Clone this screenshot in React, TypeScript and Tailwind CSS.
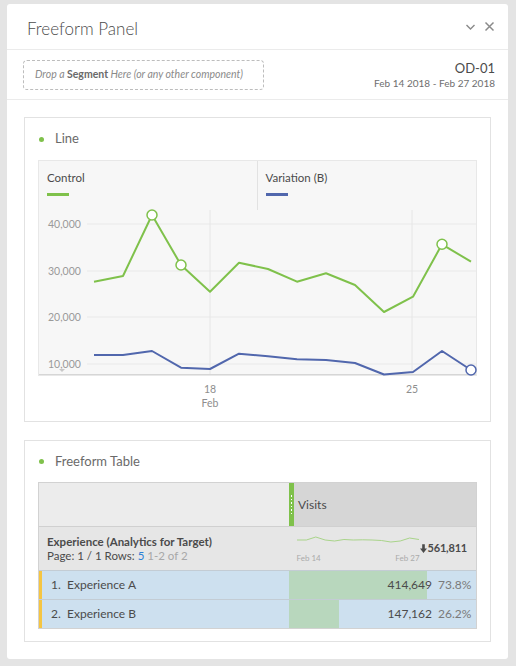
import React from "react";

const F = { fontFamily: "Lato, 'Noto Sans', sans-serif" };

const green = [71.7, 66, 5, 55, 81.7, 52.7, 59, 71.7, 63.3, 75, 102, 86.7, 34.3, 51.7];
const blue = [145, 145, 141, 157.7, 159, 143.7, 146.3, 149.3, 150, 153, 164.5, 162, 141, 160];
const xs = green.map((_, i) => 55 + 29 * i);
const pts = (arr: number[]) => arr.map((y, i) => `${xs[i]},${y}`).join(" ");

function LineChart() {
  const grid = [
    { y: 14, l: "40,000" },
    { y: 61, l: "30,000" },
    { y: 107, l: "20,000" },
    { y: 154, l: "10,000" },
  ];
  return (
    <svg width="437" height="165" className="block overflow-visible">
      {grid.map((g) => (
        <g key={g.l}>
          <line x1="48" x2="437" y1={g.y} y2={g.y} stroke="#e9e9e9" strokeWidth="1" />
          <text x="9" y={g.y + 4} fontSize="10.5" fill="#9a9a9a" fontFamily="Lato, sans-serif">
            {g.l}
          </text>
        </g>
      ))}
      <line x1="171" x2="171" y1="0" y2="165" stroke="#e6e6e6" />
      <line x1="373" x2="373" y1="0" y2="165" stroke="#e6e6e6" />
      <polygon points="20,159 26,159 23,162" fill="#c8c8c8" />
      <line x1="0" x2="437" y1="164.5" y2="164.5" stroke="#d6d6d6" />
      <polyline points={pts(green)} fill="none" stroke="#7fc14b" strokeWidth="2" strokeLinejoin="round" />
      <polyline points={pts(blue)} fill="none" stroke="#5167ad" strokeWidth="2" strokeLinejoin="round" />
      {[2, 3, 12].map((i) => (
        <circle key={i} cx={xs[i]} cy={green[i]} r="5" fill="#fff" stroke="#7fc14b" strokeWidth="1.5" />
      ))}
      <circle cx={xs[13]} cy={blue[13]} r="5" fill="#fff" stroke="#5167ad" strokeWidth="1.5" />
    </svg>
  );
}

function Spark() {
  const d = [4, 4, 1, 4, 5, 3.5, 4, 3.8, 4, 4.5, 6, 5, 2, 3.5];
  const p = d.map((y, i) => `${(i * 122) / 13},${y}`).join(" ");
  return (
    <svg width="123" height="9" className="block shrink-0">
      <polyline points={p} fill="none" stroke="#a9d48a" strokeWidth="1" />
    </svg>
  );
}

export default function App() {
  return (
    <div className="w-[516px] h-[666px] bg-[#e4e4e4] pt-[4px] pl-[7px] pr-[8px]" style={F}>
      <div className="bg-white rounded-[3px] h-[655px] flex flex-col">
        {/* header */}
        <div className="h-[46px] flex items-center justify-between pl-[20px] pr-[13px] border-b border-[#ebebeb] shrink-0">
          <div className="text-[17px] font-light text-[#4b4b4b] leading-none mt-[3px]">Freeform Panel</div>
          <div className="flex items-center gap-[8px]">
            <svg width="11" height="11" viewBox="0 0 11 11">
              <path d="M1.5 4 L5.5 8 L9.5 4" fill="none" stroke="#8a8a8a" strokeWidth="1.4" />
            </svg>
            <svg width="11" height="11" viewBox="0 0 11 11">
              <path d="M1.5 1.5 L9.5 9.5 M9.5 1.5 L1.5 9.5" fill="none" stroke="#8a8a8a" strokeWidth="1.5" />
            </svg>
          </div>
        </div>
        {/* segment row */}
        <div className="h-[50px] flex items-center justify-between pl-[16px] pr-[13px] border-b border-[#ebebeb] shrink-0">
          <div className="w-[241px] h-[30px] border border-dashed border-[#bdbdbd] rounded-[4px] flex items-center pl-[11px] text-[10.5px] italic text-[#8a8a8a]">
            Drop a&nbsp;<span className="font-bold text-[#6a6a6a] not-italic">Segment</span>&nbsp;Here (or any other component)
          </div>
          <div className="flex flex-col items-end">
            <div className="text-[13px] text-[#4b4b4b] leading-[16px]">OD-01</div>
            <div className="text-[10px] text-[#6e6e6e] leading-[14px]">Feb 14 2018 - Feb 27 2018</div>
          </div>
        </div>
        {/* content */}
        <div className="px-[17px] pt-[17px] flex flex-col gap-[18px]">
          {/* Line card */}
          <div className="h-[305px] border border-[#e2e2e2] px-[13px]">
            <div className="h-[42px] flex items-center gap-[11px] pl-[1px]">
              <div className="w-[5px] h-[5px] rounded-full bg-[#7fc14b]" />
              <div className="text-[13px] text-[#6a6a6a]">Line</div>
            </div>
            <div className="border border-[#e8e8e8] bg-[#f7f7f7]">
              <div className="h-[49px] grid grid-cols-2">
                <div className="pl-[8px] pt-[10px] border-r border-[#e2e2e2]">
                  <div className="text-[11.5px] text-[#4b4b4b] leading-[14px]">Control</div>
                  <div className="mt-[8px] w-[22px] h-[3px] bg-[#7fc14b]" />
                </div>
                <div className="pl-[8px] pt-[10px]">
                  <div className="text-[11.5px] text-[#4b4b4b] leading-[14px]">Variation (B)</div>
                  <div className="mt-[8px] w-[22px] h-[3px] bg-[#5167ad]" />
                </div>
              </div>
              <LineChart />
            </div>
            <svg width="439" height="40" className="block">
              <text x="172" y="17" fontSize="10.5" fill="#8e8e8e" textAnchor="middle" fontFamily="Lato, sans-serif">18</text>
              <text x="172" y="31" fontSize="10.5" fill="#8e8e8e" textAnchor="middle" fontFamily="Lato, sans-serif">Feb</text>
              <text x="374" y="17" fontSize="10.5" fill="#8e8e8e" textAnchor="middle" fontFamily="Lato, sans-serif">25</text>
            </svg>
          </div>
          {/* Table card */}
          <div className="h-[202px] border border-[#e2e2e2] px-[13px]">
            <div className="h-[41px] flex items-center gap-[11px] pl-[1px]">
              <div className="w-[5px] h-[5px] rounded-full bg-[#7fc14b]" />
              <div className="text-[13px] text-[#6a6a6a]">Freeform Table</div>
            </div>
            <div className="border border-[#d2d2d2]">
              {/* header */}
              <div className="h-[43px] flex">
                <div className="w-[250px] bg-[#ececec]" />
                <div className="w-[5px] bg-[#7fc14b] flex flex-col items-center justify-center gap-[2px]">
                  {[0, 1, 2, 3, 4, 5].map((i) => (
                    <div key={i} className="w-[1px] h-[1.5px] bg-white" />
                  ))}
                </div>
                <div className="flex-1 bg-[#d6d6d6] flex items-center pl-[4px] text-[12px] text-[#4b4b4b]">Visits</div>
              </div>
              {/* summary */}
              <div className="h-[44px] flex bg-[#e6e6e6] border-t border-[#d0d0d0]">
                <div className="w-[250px] pl-[8px] pt-[8px]">
                  <div className="text-[11.5px] font-bold text-[#4b4b4b] leading-[14px]">Experience (Analytics for Target)</div>
                  <div className="text-[11.5px] text-[#4b4b4b] leading-[14px]">
                    Page: 1 / 1 Rows: <span className="text-[#2d7fd6]">5</span> <span className="text-[#a8a8a8]">1-2 of 2</span>
                  </div>
                </div>
                <div className="flex-1 flex items-center pl-[10px] pr-[9px]">
                  <div className="flex flex-col shrink-0">
                    <div className="pt-[2px]"><Spark /></div>
                    <div className="flex justify-between text-[8px] text-[#ababab] mt-[7px] w-[123px]">
                      <span>Feb 14</span>
                      <span>Feb 27</span>
                    </div>
                  </div>
                  <div className="ml-auto text-[11px] font-bold text-[#4b4b4b] flex items-center tracking-[-0.2px]">
                    <svg width="7" height="9" viewBox="0 0 8 10" className="mr-[1px]">
                      <path d="M2.5 0 H5.5 V5 H8 L4 10 L0 5 H2.5 Z" fill="#4b4b4b" />
                    </svg>
                    561,811
                  </div>
                </div>
              </div>
              {[
                { n: "1.", name: "Experience A", v: "414,649", p: "73.8%", w: 138 },
                { n: "2.", name: "Experience B", v: "147,162", p: "26.2%", w: 50 },
              ].map((r) => (
                <div key={r.n} className="h-[29px] flex bg-[#cde0ef] border-t border-[#c3ccd4] relative">
                  <div className="w-[3px] bg-[#f5c542]" />
                  <div className="w-[247px] flex items-center text-[12px] text-[#4b4b4b]">
                    <span className="pl-[9px] w-[25px]">{r.n}</span>
                    <span>{r.name}</span>
                  </div>
                  <div className="flex-1 relative flex items-center justify-end pr-[9px] text-[12px]">
                    <div className="absolute left-0 top-0 bottom-0 bg-[#b8d7bd]" style={{ width: r.w }} />
                    <span className="relative text-[#4b4b4b]">{r.v}</span>
                    <span className="relative text-[#7a7a7a] ml-[6px] w-[29px] text-right">{r.p}</span>
                  </div>
                </div>
              ))}
            </div>
          </div>
        </div>
      </div>
    </div>
  );
}
